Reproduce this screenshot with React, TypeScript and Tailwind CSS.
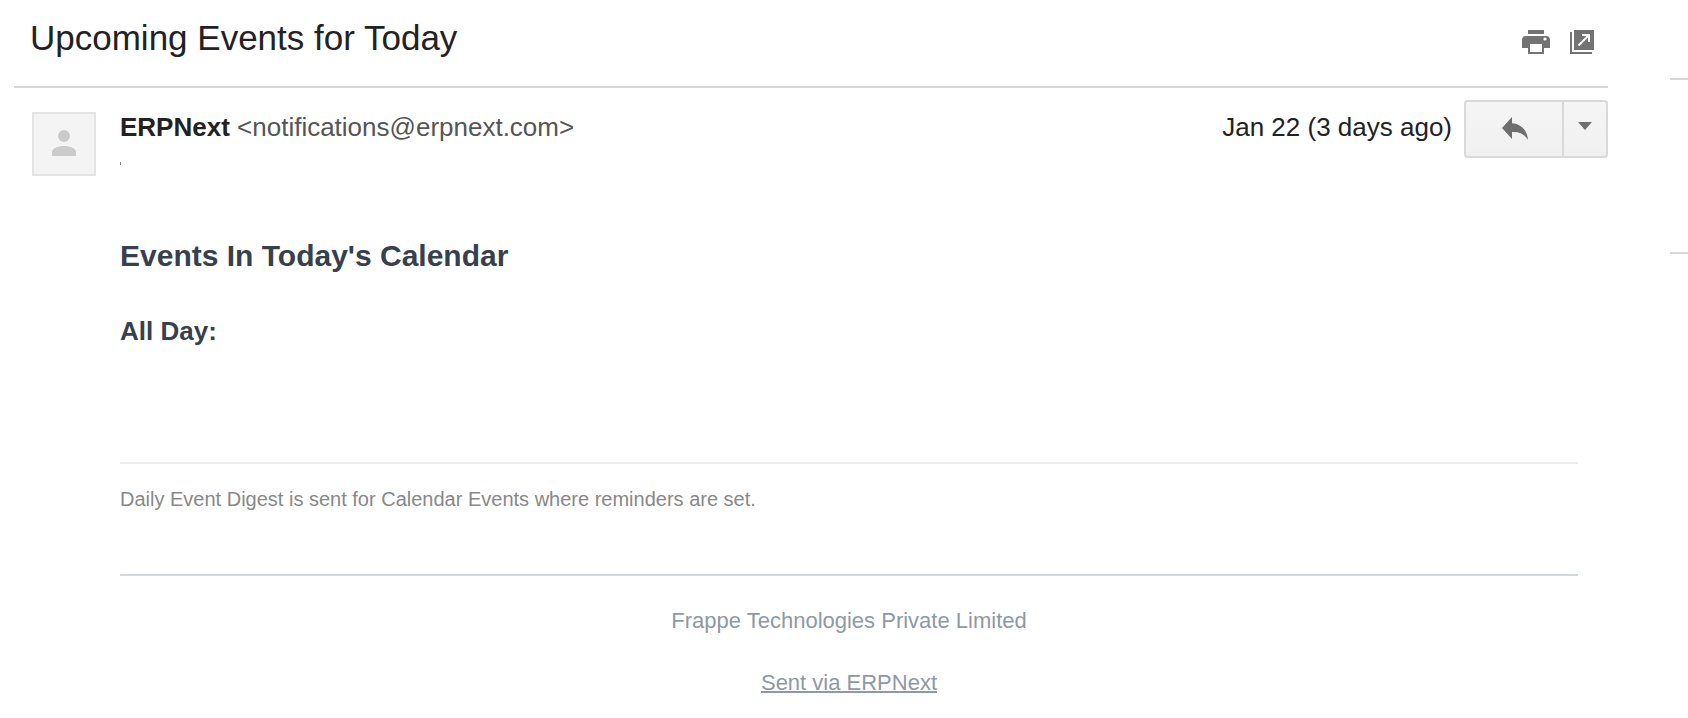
function PrintIcon() {
  return (
    <svg width="28" height="24" viewBox="0 0 28 24" fill="#737373" aria-hidden="true">
      <rect x="6" width="16" height="4" />
      <path
        fillRule="evenodd"
        d="M4 6h20a4 4 0 0 1 4 4v8h-6v6H6v-6H0v-8a4 4 0 0 1 4-4zM8 14v8h12v-8zM23 7.4a1.6 1.6 0 1 0 0 3.2 1.6 1.6 0 0 0 0-3.2z"
      />
    </svg>
  );
}

function NewWindowIcon() {
  return (
    <svg width="24" height="24" viewBox="0 0 24 24" fill="#737373" aria-hidden="true">
      <path d="M0 2h2v20h20v2H0z" />
      <rect x="4" width="20" height="20" />
      <path d="M12 5h7M19 4v8" stroke="#fff" strokeWidth="2" fill="none" />
      <path d="M8.5 15.5 18.5 5.5" stroke="#fff" strokeWidth="2" fill="none" />
    </svg>
  );
}

function PersonIcon() {
  return (
    <svg width="24" height="26" viewBox="0 0 24 26" fill="#cbcbcb" aria-hidden="true">
      <circle cx="12" cy="6" r="6" />
      <path d="M0 26v-4c0-4 7-6 12-6s12 2 12 6v4z" />
    </svg>
  );
}

function ReplyIcon() {
  return (
    <svg width="26" height="23" viewBox="0 0 26 23" fill="#6f6f6f" aria-hidden="true">
      <path d="M0 11 10 0v6.300c9 .7 15.500 7 16 16.700-3-5.500-8-8.300-16-8V22z" />
    </svg>
  );
}

function CaretIcon() {
  return (
    <svg width="14" height="8" viewBox="0 0 14 8" fill="#6f6f6f" aria-hidden="true">
      <path d="M0 0h14L7 8z" />
    </svg>
  );
}

export default function App() {
  return (
    <div className="flex min-h-screen bg-white pl-[14px] font-['Liberation_Sans',Arial,sans-serif] text-[#222]">
      <main className="min-w-0 flex-1">
        <header className="flex items-start justify-between border-b-2 border-[#d8d8d8] pr-[14px] pb-[26px] pl-4 pt-4">
          <h1 className="text-[35px] leading-[44px]">Upcoming Events for Today</h1>
          <div className="mt-[14px] flex gap-5">
            <button type="button" aria-label="Print all">
              <PrintIcon />
            </button>
            <button type="button" aria-label="In new window">
              <NewWindowIcon />
            </button>
          </div>
        </header>

        <section className="flex items-start pt-3 pl-[18px]">
          <div className="mt-3 flex size-16 shrink-0 items-center justify-center border-2 border-[#e4e4e4] bg-[#f4f4f4] pb-[2px]">
            <PersonIcon />
          </div>
          <div className="mt-3 ml-6 min-w-0 flex-1">
            <p className="text-[26px] leading-[30px] text-[#555]">
              <b className="text-[#222]">ERPNext</b> &lt;notifications@erpnext.com&gt;
            </p>
            <div className="mt-5 h-[3px] w-px bg-[#888]" />
          </div>
          <time className="mt-3 mr-3 text-[26px] leading-[30px]">Jan 22 (3 days ago)</time>
          <div className="flex h-[58px] w-36 rounded-[4px] border-2 border-[#d9d9d9] bg-linear-to-b from-[#f5f5f5] to-[#f0f0f0]">
            <button type="button" aria-label="Reply" className="flex flex-1 items-center justify-center border-r-2 border-[#d9d9d9] pb-[2px] pl-[2px]">
              <ReplyIcon />
            </button>
            <button type="button" aria-label="More" className="flex w-[42px] items-center justify-center pb-[6px]">
              <CaretIcon />
            </button>
          </div>
        </section>

        <article className="mr-[30px] ml-[106px] pt-[62px]">
          <h2 className="text-[30px] leading-9 font-bold text-[#36414c]">Events In Today's Calendar</h2>
          <h3 className="mt-[42px] text-[26px] leading-[30px] font-bold text-[#36414c]">All Day:</h3>
          <hr className="mt-[116px] border-t-2 border-[#ededed]" />
          <p className="mt-5 text-[20px] leading-[30px] text-[#888]">
            Daily Event Digest is sent for Calendar Events where reminders are set.
          </p>
          <footer className="mt-[60px] border-t-2 border-[#d1d8dd] pt-[30px] text-center text-[22px] leading-[30px] text-[#8d99a6]">
            <p>Frappe Technologies Private Limited</p>
            <p className="mt-8">
              <a href="#erpnext" className="underline decoration-2">
                Sent via ERPNext
              </a>
            </p>
          </footer>
        </article>
      </main>

      <aside className="ml-[62px] w-[18px] shrink-0 pt-[78px]">
        <div className="h-44 border-y-2 border-[#d8d8d8]" />
      </aside>
    </div>
  );
}
